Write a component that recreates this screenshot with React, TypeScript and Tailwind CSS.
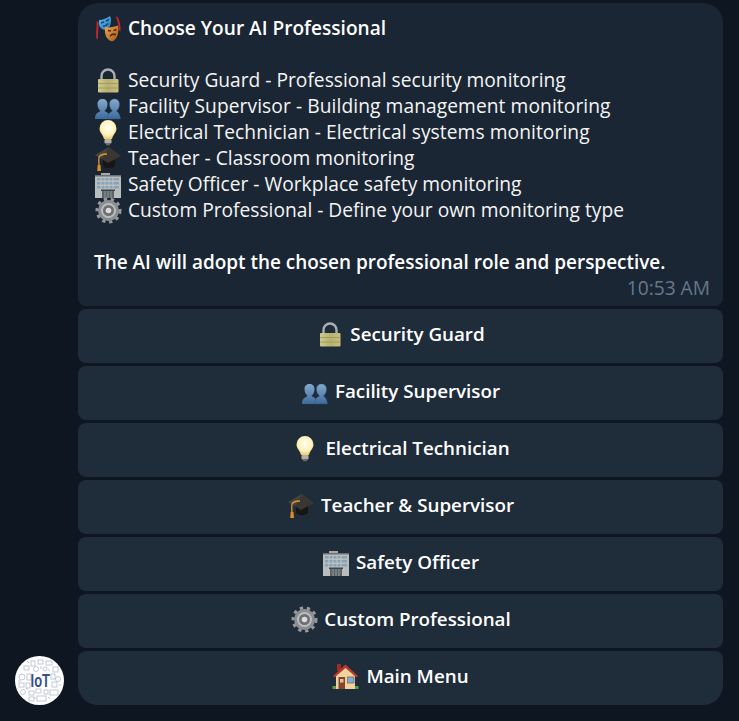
const Masks = () => (
  <svg viewBox="0 0 28 28" className="h-7 w-7 shrink-0">
    <defs>
      <linearGradient id="maskBlue" x1="0" y1="0" x2="1" y2="1">
        <stop offset="0" stopColor="#5cb8ee" />
        <stop offset="1" stopColor="#2b79b8" />
      </linearGradient>
      <linearGradient id="maskOrange" x1="0" y1="0" x2="1" y2="1">
        <stop offset="0" stopColor="#efa84a" />
        <stop offset="1" stopColor="#a85a1c" />
      </linearGradient>
    </defs>
    <path d="M2.500 7c.5 6-1 11 0 18l1.500-.5c-.5-6 1-11 .5-16z" fill="#c4262e" />
    <path d="M22 3c1.500 5 3 8 2.500 13l2 1.500c.5-6-1-11-3-15z" fill="#c4262e" />
    <path d="M5 6c4 0 8-2 11-4 2 4 1 10-2 13-2 2-6 1-8-2-1-2-1.500-4-1-7z" fill="url(#maskBlue)" />
    <path d="M7 9l3-1M12 7l3-1.500M9 12c2 .5 3.500-.5 5-2.500" stroke="#0f4a76" strokeWidth="1.400" fill="none" />
    <path d="M11 13c4 1 9 0 13-1.500 1 6 0 12-4 15-3 2-6-.5-8-4-1-3-1.500-6-1-9.500z" fill="url(#maskOrange)" />
    <path d="M14 16.500l3 .5M19.500 16.500l3-1M16 22c2-2 4-2.500 6-1" stroke="#4f2809" strokeWidth="1.500" fill="none" />
  </svg>
)

const Lock = () => (
  <svg viewBox="0 0 28 28" className="h-7 w-7 shrink-0">
    <defs>
      <linearGradient id="lockBody" x1="0" y1="0" x2="1" y2="0">
        <stop offset="0" stopColor="#cfca8e" />
        <stop offset="0.5" stopColor="#b7b06e" />
        <stop offset="1" stopColor="#c8c180" />
      </linearGradient>
    </defs>
    <path d="M7.500 14V10a6.500 6.500 0 0 1 13 0v4" fill="none" stroke="#a9aeb3" strokeWidth="2.400" />
    <rect x="4" y="13" width="20.500" height="13.500" rx="1" fill="url(#lockBody)" />
    <path d="M4 17.500h20.500M4 22h20.500" stroke="#9c9556" strokeWidth="0.800" />
  </svg>
)

const People = () => (
  <svg viewBox="0 0 28 28" className="h-7 w-7 shrink-0">
    <defs>
      <linearGradient id="peopleFill" x1="0" y1="0" x2="0" y2="1">
        <stop offset="0" stopColor="#86a9cd" />
        <stop offset="1" stopColor="#3c6a9c" />
      </linearGradient>
    </defs>
    <path d="M1 27c0-5 2-6 5.500-8-2-2-3-4-3-7 0-3 2-5 5-5s5 2 5 5c0 3-1 5-3 7 4 2 5.500 3 5.500 8z" fill="url(#peopleFill)" />
    <path d="M13.500 27c0-5 1.500-6 5-8-2-2-3-4-3-7 0-3 2-5 5-5s5 2 5 5c0 3-1 5-3 7 1.500 1 3.500 3 4 8z" fill="url(#peopleFill)" stroke="#2f547c" strokeWidth="0.400" />
  </svg>
)

const Bulb = () => (
  <svg viewBox="0 0 28 28" className="h-7 w-7 shrink-0">
    <defs>
      <radialGradient id="bulbGlow" cx="0.5" cy="0.4" r="0.6">
        <stop offset="0" stopColor="#fffef5" />
        <stop offset="0.65" stopColor="#fef2bd" />
        <stop offset="1" stopColor="#f0cb6c" />
      </radialGradient>
    </defs>
    <path d="M14 2a8.500 8.500 0 0 0-8.500 8.500c0 4 3.500 6 4.500 10.500h8c1-4.500 4.500-6.500 4.500-10.500A8.500 8.500 0 0 0 14 2z" fill="url(#bulbGlow)" />
    <rect x="10.500" y="21" width="7" height="4.500" rx="1" fill="#b3b0a8" />
    <rect x="12" y="25.500" width="4" height="1.800" rx="0.900" fill="#6d6b66" />
  </svg>
)

const Cap = () => (
  <svg viewBox="0 0 28 28" className="h-7 w-7 shrink-0">
    <path d="M9 15v7c3 3 9 3 12 0v-7z" fill="#181614" />
    <path d="M1 11 15 3l12 9-13 7z" fill="#3a3733" />
    <path d="M15 3 1 11l7 4z" fill="#474440" />
    <path d="M13 10c-4 0-7 1-8 3-.5 3 0 5 0 8" stroke="#dc9a33" strokeWidth="1.300" fill="none" />
    <path d="M3.700 21h2.800l.5 6H3.200z" fill="#dc8e25" />
  </svg>
)

const Building = () => (
  <svg viewBox="0 0 28 28" className="h-7 w-7 shrink-0">
    <rect x="7" y="3" width="9" height="2" fill="#a9a9a6" />
    <rect x="1" y="5" width="26" height="23" fill="#b9bdbe" />
    <rect x="1" y="5" width="26" height="1.500" fill="#6d6f70" />
    <g fill="#8aa3b4">
      <rect x="3" y="8" width="22" height="2.500" />
      <rect x="3" y="12" width="22" height="2.500" />
      <rect x="3" y="16" width="22" height="2.500" />
    </g>
    <path d="M7 7.500v12M11 7.500v12M15 7.500v12M19 7.500v12" stroke="#c9ced0" strokeWidth="0.700" />
    <rect x="8" y="20.500" width="12" height="7.500" fill="#5c6468" />
    <rect x="7" y="19.500" width="14" height="1.500" fill="#3e4448" />
    <path d="M11 21v7M14 21v7M17 21v7" stroke="#9aa8ae" strokeWidth="0.800" />
  </svg>
)

const Gear = () => (
  <svg viewBox="0 0 28 28" className="h-7 w-7 shrink-0">
    <circle cx="14.500" cy="14.500" r="10.500" fill="#8c8d90" />
    <circle cx="14.500" cy="14.500" r="11.500" fill="none" stroke="#97989b" strokeWidth="3" strokeDasharray="3.300 3.720" />
    <circle cx="14.500" cy="14.500" r="7.500" fill="#bcbdbf" />
    <circle cx="14.500" cy="14.500" r="5.500" fill="#6e6f72" />
    <circle cx="14.500" cy="14.500" r="2.800" fill="#dcdcdc" />
  </svg>
)

const House = () => (
  <svg viewBox="0 0 28 28" className="h-7 w-7 shrink-0">
    <rect x="5" y="2" width="4" height="7" fill="#9c2c26" />
    <rect x="0.500" y="24" width="4" height="3" fill="#5d9c3c" />
    <rect x="22.500" y="24" width="4" height="3" fill="#5d9c3c" />
    <path d="M4 13 13.500 4 23 13v14H4z" fill="#f0d29c" />
    <path d="M1 14 13.500 2.500 26 14l-1.500 1.500L13.500 6 2.500 15.500z" fill="#b9382d" />
    <rect x="6.500" y="15" width="6.500" height="12" fill="#84432a" />
    <rect x="8" y="17" width="3.500" height="3.500" fill="#d7c2a4" />
    <rect x="15.500" y="15" width="6.500" height="6" fill="#76aee0" stroke="#8d6a4b" strokeWidth="0.800" />
  </svg>
)

const Avatar = () => (
  <div className="relative flex h-[49px] w-[49px] items-center justify-center overflow-hidden rounded-full bg-white">
    <svg viewBox="0 0 49 49" className="absolute inset-0 h-full w-full" fill="none" stroke="#bcc3d1" strokeWidth="0.900">
      <rect x="9" y="10" width="5" height="4" />
      <rect x="16" y="5" width="4" height="5" />
      <rect x="23" y="4" width="5" height="4" />
      <rect x="31" y="5" width="6" height="4" />
      <rect x="38" y="11" width="5" height="5" />
      <circle cx="21" cy="13" r="2.500" />
      <circle cx="30" cy="13" r="2" />
      <circle cx="7" cy="21" r="3" />
      <rect x="12" y="18" width="4" height="6" />
      <rect x="36" y="18" width="4" height="5" />
      <circle cx="43" cy="23" r="2.500" />
      <rect x="4" y="27" width="5" height="4" />
      <rect x="11" y="27" width="4" height="5" />
      <rect x="37" y="26" width="5" height="5" />
      <circle cx="8" cy="36" r="2.500" />
      <rect x="14" y="35" width="5" height="4" />
      <rect x="21" y="33" width="5" height="4" />
      <rect x="29" y="34" width="4" height="4" />
      <rect x="35" y="34" width="8" height="5" />
      <rect x="14" y="41" width="5" height="4" />
      <rect x="22" y="40" width="9" height="5" />
      <path d="M12 5l2 2M26 10v3M33 13l2 2M3 25h3M44 29h2M11 32l2 2M19 42h2M33 41l2 2" />
    </svg>
    <span className="relative ml-[2px] inline-block scale-x-[0.68] font-['Liberation_Sans',sans-serif] text-[19px] leading-none font-bold text-[#34508c]">
      IoT
    </span>
  </div>
)

const rows = [
  { icon: <Lock />, text: "Security Guard - Professional security monitoring", cls: "" },
  { icon: <People />, text: "Facility Supervisor - Building management monitoring", cls: "tracking-[0.08px]" },
  { icon: <Bulb />, text: "Electrical Technician - Electrical systems monitoring", cls: "tracking-[0.08px]" },
  { icon: <Cap />, text: "Teacher - Classroom monitoring", cls: "" },
  { icon: <Building />, text: "Safety Officer - Workplace safety monitoring", cls: "" },
  { icon: <Gear />, text: "Custom Professional - Define your own monitoring type", cls: "" },
]

const buttons = [
  { icon: <Lock />, label: "Security Guard" },
  { icon: <People />, label: "Facility Supervisor" },
  { icon: <Bulb />, label: "Electrical Technician" },
  { icon: <Cap />, label: "Teacher & Supervisor" },
  { icon: <Building />, label: "Safety Officer" },
  { icon: <Gear />, label: "Custom Professional" },
  { icon: <House />, label: "Main Menu" },
]

export default function App() {
  return (
    <div className="flex h-[721px] w-[739px] gap-[14px] overflow-hidden bg-[#0e1621] pt-[3px] pr-4 pb-4 pl-[15px] font-['Open_Sans',sans-serif] text-[19.2px] leading-[26px] text-[#f5f5f5]">
      <div className="flex flex-col justify-end">
        <Avatar />
      </div>
      <div className="flex w-[645px] flex-col gap-[3px]">
        <div className="h-[303px] rounded-t-[20px] rounded-b-[8px] bg-[#1a2634] pt-3 pr-[13px] pl-4">
          <div className="flex h-[26px] items-center gap-[6px] text-[19.1px] font-semibold text-white">
            <Masks />
            <span>Choose Your AI Professional</span>
          </div>
          <div className="h-[26px]" />
          {rows.map((r) => (
            <div key={r.text} className={`flex h-[26px] items-center gap-[6px] ${r.cls}`}>
              {r.icon}
              <span>{r.text}</span>
            </div>
          ))}
          <div className="h-[26px]" />
          <div className="text-[18.95px] font-semibold text-white">
            The AI will adopt the chosen professional role and perspective.
          </div>
          <div className="text-right text-[#66788a]">10:53 AM</div>
        </div>
        {buttons.map((b, i) => (
          <div
            key={b.label}
            className={`flex h-[54px] items-center justify-center gap-[6px] bg-[#1f2c3a] pb-1 text-[18.8px] font-semibold text-white ${
              i === buttons.length - 1 ? "rounded-t-[8px] rounded-b-[20px]" : "rounded-[8px]"
            }`}
          >
            {b.icon}
            <span>{b.label}</span>
          </div>
        ))}
      </div>
    </div>
  )
}
